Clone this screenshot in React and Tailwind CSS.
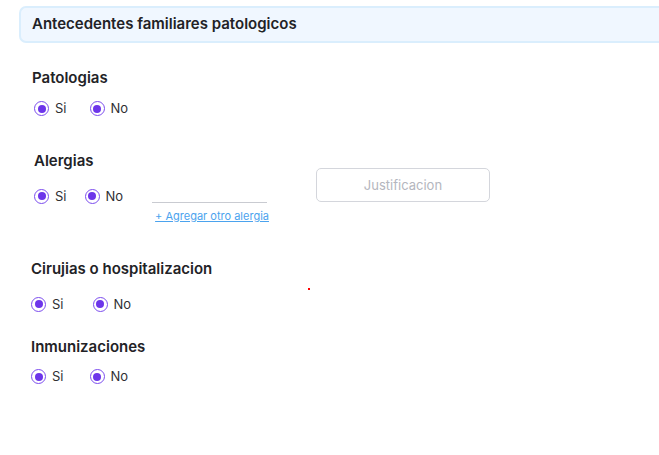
import {useState} from "react";

function Radio({label, checked, onChange}) {
    return (
        <label className="flex items-center gap-[6px] cursor-pointer">
            <span className="w-[15px] h-[15px] rounded-full border-[1.5px] border-[#7c4dee] flex items-center justify-center">
                {checked && <span className="w-[8px] h-[8px] rounded-full bg-[#6d35ea]"/>}
            </span>
            <input type="radio" className="hidden" checked={checked} onChange={onChange}/>
            <span className="text-[13px] text-[#2f2f33]">{label}</span>
        </label>
    );
}

function YesNo({gap}) {
    const [value, setValue] = useState("both");
    return (
        <div className={`flex items-center ${gap}`}>
            <Radio label="Si" checked={value !== "no-only"} onChange={() => setValue("both")}/>
            <Radio label="No" checked={value !== "si-only"} onChange={() => setValue("both")}/>
        </div>
    );
}

export default function App() {
    return (
        <div className="w-[659px] h-[455px] bg-white overflow-hidden relative font-['Inter',sans-serif] text-[#222226]">
            <div className="mt-[6px] ml-[19px] h-[37px] rounded-l-[7px] border-2 border-r-0 border-[#daeefd] bg-[#f0f7ff] flex items-center pl-[11px]">
                <h2 className="text-[15px] font-semibold">Antecedentes familiares patologicos</h2>
            </div>

            <div className="pl-[32px] mt-[25px]">
                <h3 className="text-[15px] font-semibold leading-[20px]">Patologias</h3>
                <div className="mt-[11px] pl-[2px]">
                    <YesNo gap="gap-[23px]"/>
                </div>
            </div>

            <div className="pl-[34px] mt-[32px]">
                <h3 className="text-[15px] font-semibold leading-[20px]">Alergias</h3>
                <div className="flex items-start mt-[16px]">
                    <YesNo gap="gap-[18px]"/>
                    <div className="ml-[29px] flex flex-col items-start mt-[14px]">
                        <div className="w-[115px] border-b-[1.5px] border-[#c9cbd1] h-[2px]"/>
                        <a href="#" className="mt-[6px] ml-[3px] text-[11px] text-[#4ba3ee] underline leading-[14px]">
                            + Agregar otro alergia
                        </a>
                    </div>
                    <input
                        placeholder="Justificacion"
                        className="ml-[47px] -mt-[19px] w-[174px] h-[34px] rounded-[5px] border border-[#d4d6dc] text-center text-[13px] placeholder:text-[#b4b6be] outline-none"
                    />
                </div>
            </div>

            <div className="pl-[31px] mt-[36px]">
                <h3 className="text-[15px] font-semibold leading-[20px]">Cirujias o hospitalizacion</h3>
                <div className="mt-[16px]">
                    <YesNo gap="gap-[29px]"/>
                </div>
            </div>

            <span className="absolute left-[308px] top-[288px] w-[2px] h-[2px] bg-[#ff0000]"/>

            <div className="pl-[31px] mt-[23px]">
                <h3 className="text-[15px] font-semibold leading-[20px]">Inmunizaciones</h3>
                <div className="mt-[10px]">
                    <YesNo gap="gap-[26px]"/>
                </div>
            </div>
        </div>
    );
}
